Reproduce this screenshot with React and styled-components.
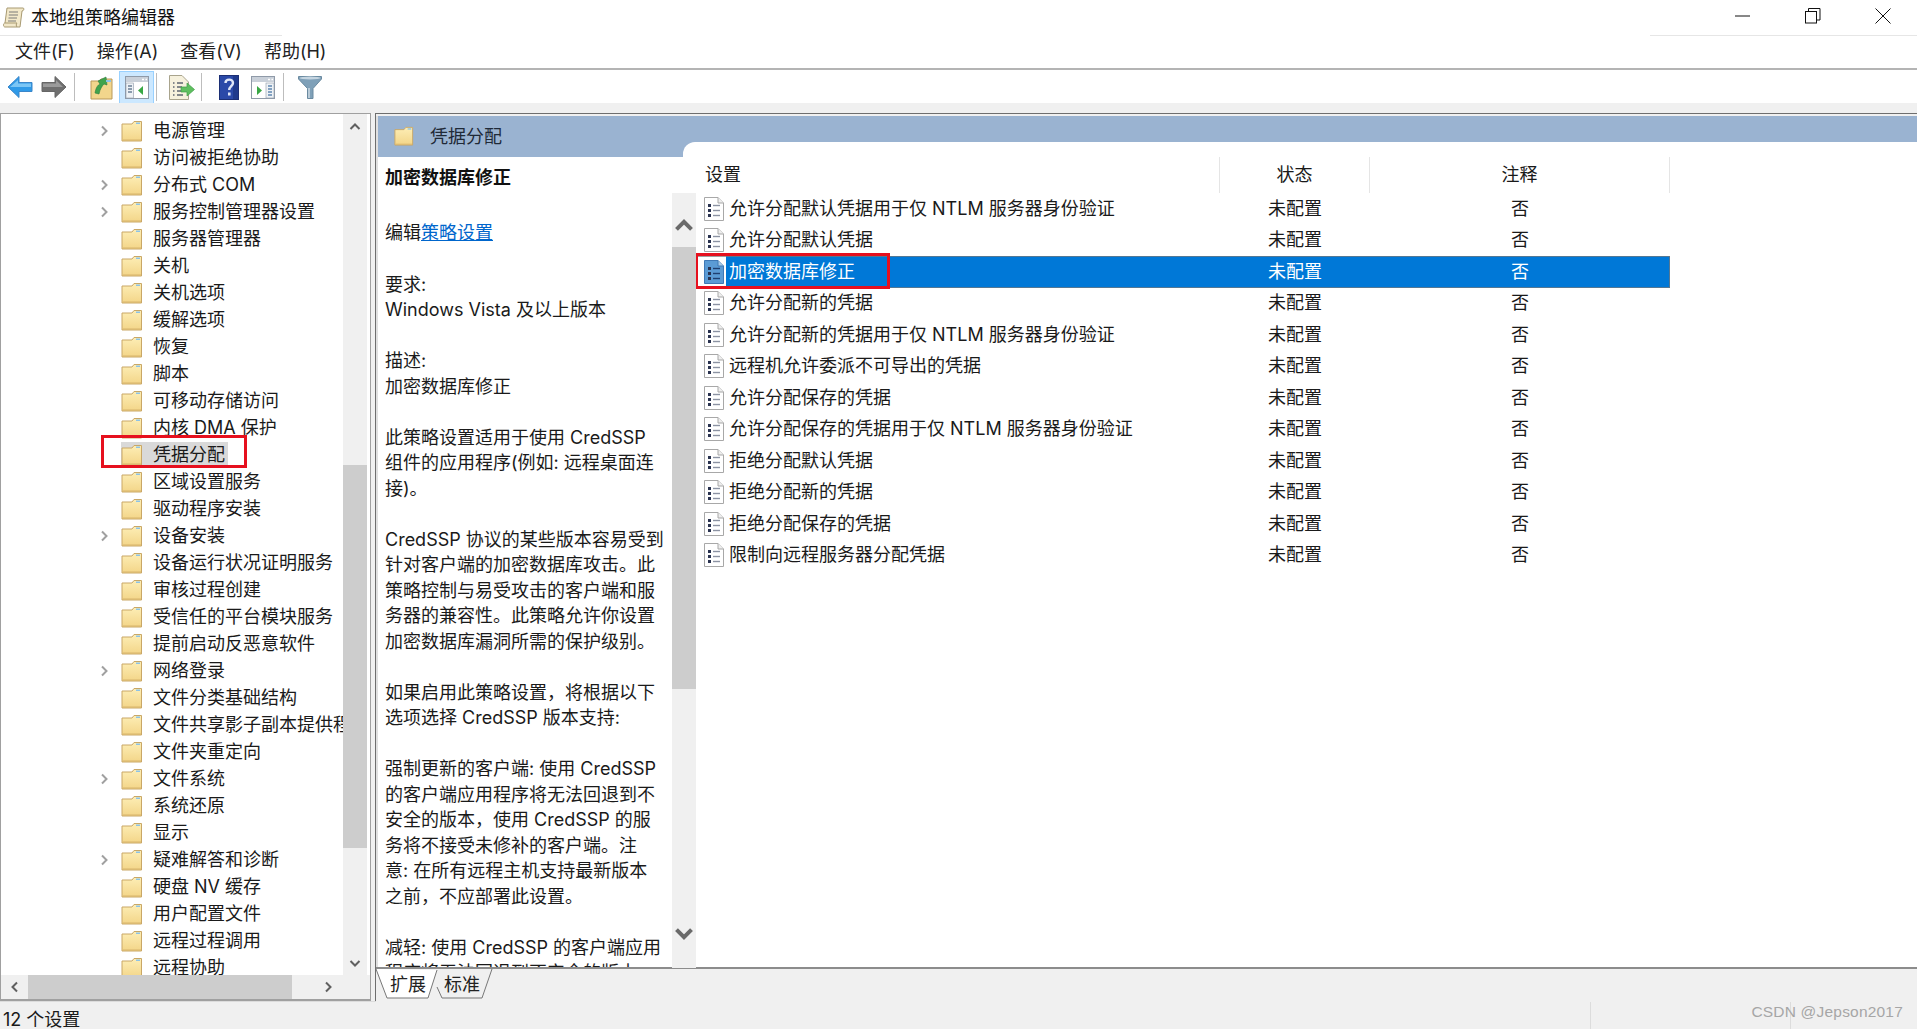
import React from "react";
import styled, { createGlobalStyle } from "styled-components";

const treeItems = [
  ["电源管理", true], ["访问被拒绝协助"], ["分布式 COM", true], ["服务控制管理器设置", true],
  ["服务器管理器"], ["关机"], ["关机选项"], ["缓解选项"], ["恢复"], ["脚本"], ["可移动存储访问"],
  ["内核 DMA 保护"], ["凭据分配", false, true], ["区域设置服务"], ["驱动程序安装"], ["设备安装", true],
  ["设备运行状况证明服务"], ["审核过程创建"], ["受信任的平台模块服务"], ["提前启动反恶意软件"],
  ["网络登录", true], ["文件分类基础结构"], ["文件共享影子副本提供程序"], ["文件夹重定向"],
  ["文件系统", true], ["系统还原"], ["显示"], ["疑难解答和诊断", true], ["硬盘 NV 缓存"],
  ["用户配置文件"], ["远程过程调用"], ["远程协助"],
];

const policies = [
  "允许分配默认凭据用于仅 NTLM 服务器身份验证",
  "允许分配默认凭据",
  "加密数据库修正",
  "允许分配新的凭据",
  "允许分配新的凭据用于仅 NTLM 服务器身份验证",
  "远程机允许委派不可导出的凭据",
  "允许分配保存的凭据",
  "允许分配保存的凭据用于仅 NTLM 服务器身份验证",
  "拒绝分配默认凭据",
  "拒绝分配新的凭据",
  "拒绝分配保存的凭据",
  "限制向远程服务器分配凭据",
];

const descLines = [
  "要求:", "Windows Vista 及以上版本", "", "描述:", "加密数据库修正", "",
  "此策略设置适用于使用 CredSSP", "组件的应用程序(例如: 远程桌面连", "接)。", "",
  "CredSSP 协议的某些版本容易受到", "针对客户端的加密数据库攻击。此", "策略控制与易受攻击的客户端和服",
  "务器的兼容性。此策略允许你设置", "加密数据库漏洞所需的保护级别。", "",
  "如果启用此策略设置，将根据以下", "选项选择 CredSSP 版本支持:", "",
  "强制更新的客户端: 使用 CredSSP", "的客户端应用程序将无法回退到不", "安全的版本，使用 CredSSP 的服",
  "务将不接受未修补的客户端。注", "意: 在所有远程主机支持最新版本", "之前，不应部署此设置。", "",
  "减轻: 使用 CredSSP 的客户端应用", "程序将无法回退到不安全的版本，",
];

const GlobalStyle = createGlobalStyle`
  html, body { margin: 0; padding: 0; height: 100%; overflow: hidden; background: #f0f0f0; }
  body { font-family: Inter, "Noto Sans CJK SC", sans-serif; font-size: 18px; color: #1a1a1a; }
`;

const Window = styled.div`
  width: 1917px;
  height: 1029px;
  display: flex;
  flex-direction: column;
  overflow: hidden;
  position: relative;
`;

const TitleBar = styled.div`
  height: 35px;
  flex: none;
  display: flex;
  align-items: center;
  background: #fff;
  padding-left: 2px;
`;

const TitleText = styled.span`
  margin-left: 6px;
  color: #111;
  flex: 1;
  line-height: 35px;
`;

const WinButton = styled.div`
  width: 70px;
  height: 35px;
  display: flex;
  align-items: center;
  justify-content: center;
  padding-bottom: 3px;
  box-sizing: border-box;
`;

const WinButtons = styled.div`
  display: flex;
  margin-right: -1px;
`;

const MenuBar = styled.div`
  height: 33px;
  flex: none;
  display: flex;
  align-items: center;
  gap: 22px;
  padding-left: 15px;
  background-color: #fff;
  background-image: linear-gradient(#e6e6e6, #e6e6e6), linear-gradient(#e6e6e6, #e6e6e6);
  background-size: 282px 1px, 267px 1px;
  background-position: left top, right top;
  background-repeat: no-repeat;
  border-bottom: 2px solid #b4b4b4;
`;

const MenuItem = styled.span`
  line-height: 35px;
  color: #222;
`;

const ToolBar = styled.div`
  height: 33px;
  flex: none;
  display: flex;
  align-items: center;
  background: #fff;
  padding: 1px 0 0 7px;
  box-sizing: border-box;
`;

const ToolIcon = styled.div`
  display: flex;
  align-items: center;
  justify-content: center;
  height: 33px;
  box-sizing: border-box;
  width: ${(p) => p.$w}px;
  margin-left: ${(p) => p.$ml || 0}px;
  ${(p) => p.$active && "background: #cce8ff; border: 1px solid #99d1ff;"}
`;

const ToolSep = styled.div`
  width: 1px;
  height: 28px;
  background: #bdbdbd;
  margin-left: ${(p) => p.$ml || 0}px;
`;

const Band = styled.div`
  height: 10px;
  flex: none;
  background: #f0f0f0;
`;

const Main = styled.div`
  flex: 1;
  display: flex;
  min-height: 0;
`;

const TreePane = styled.div`
  width: 371px;
  flex: none;
  height: 888px;
  box-sizing: border-box;
  background: #fff;
  border: 1px solid #a0a0a0;
  border-bottom-width: 2px;
  display: grid;
  grid-template-columns: 342px 1fr;
  grid-template-rows: 1fr 24px;
`;

const TreeList = styled.div`
  overflow: hidden;
  padding-top: 3px;
`;

const TreeRow = styled.div`
  height: 27px;
  display: flex;
  align-items: center;
  white-space: nowrap;
`;

const Expander = styled.div`
  width: 14px;
  flex: none;
  margin-left: 96px;
  margin-right: 10px;
  display: flex;
  justify-content: center;
`;

const TreeLabel = styled.div`
  display: flex;
  align-items: center;
  height: 25px;
  gap: 10px;
  padding-right: 3px;
  background: ${(p) => (p.$selected ? "#d9d9d9" : "transparent")};
  line-height: 25px;
  overflow: hidden;
`;

const VScroll = styled.div`
  background: #f0f0f0;
  display: flex;
  flex-direction: column;
  align-items: center;
`;

const TreeScroll = styled(VScroll)`
  margin-right: 3px;
`;

const ScrollBtn = styled.div`
  height: ${(p) => p.$h || 25}px;
  width: ${(p) => (p.$w ? `${p.$w}px` : "100%")};
  flex: none;
  display: flex;
  align-items: center;
  justify-content: center;
`;

const ScrollGap = styled.div`
  flex: ${(p) => p.$flex || 1};
  min-height: ${(p) => p.$h || 0}px;
`;

const VThumb = styled.div`
  width: 100%;
  height: ${(p) => p.$h}px;
  flex: none;
  background: #cdcdcd;
`;

const HScroll = styled.div`
  background: #f0f0f0;
  grid-column: 1 / 3;
  display: flex;
  align-items: center;
`;

const HThumb = styled.div`
  width: 264px;
  height: 24px;
  background: #cdcdcd;
`;

const Splitter = styled.div`
  width: 4px;
  flex: none;
`;

const RightPane = styled.div`
  flex: 1;
  min-width: 0;
  height: 888px;
  display: flex;
  flex-direction: column;
  border-top: 1px solid #6e6e6e;
  border-left: 1px solid #6e6e6e;
`;

const BlueHead = styled.div`
  height: 41px;
  flex: none;
  margin-top: 2px;
  background: #9ab3d1;
  display: flex;
  align-items: flex-start;
  padding-left: 16px;
  gap: 16px;
  line-height: 42px;
  color: #1f2a38;
  border-left: 2px solid #e0e0e0;
`;

const BlueIcon = styled.div`
  height: 40px;
  display: flex;
  align-items: center;
`;

const Content = styled.div`
  flex: 1;
  min-height: 0;
  display: flex;
  background: #fff;
  border-left: 2px solid #e0e0e0;
`;

const Desc = styled.div`
  width: 294px;
  flex: none;
  overflow: hidden;
  padding: 8px 0 0 7px;
  box-sizing: border-box;
  line-height: 25.5px;
  white-space: nowrap;
`;

const DescTitle = styled.div`
  font-weight: 700;
  color: #111;
`;

const EditLine = styled.div`
  margin: 29px 0 26px;
  height: 26px;
`;

const PolicyLink = styled.a`
  color: #0066cc;
  text-decoration: underline;
`;

const DescLine = styled.div`
  height: 25.5px;
`;

const DescScroll = styled(VScroll)`
  width: 24px;
  flex: none;
  margin-top: 36px;
  position: relative;
  z-index: 1;
`;

const ListPane = styled.div`
  flex: 1;
  min-width: 0;
  margin: -15px 0 0 -13px;
  padding-left: 13px;
  background: #fff;
  border-top-left-radius: 12px;
`;

const ListHeader = styled.div`
  height: 36px;
  margin-top: 15px;
  display: grid;
  grid-template-columns: 524px 150px 300px;
  align-items: center;
`;

const HeadCell = styled.div`
  height: 36px;
  border-right: 1px solid #e5e5e5;
  padding-left: ${(p) => p.$left || 0}px;
  text-align: ${(p) => (p.$left ? "left" : "center")};
  line-height: 36px;
  box-sizing: border-box;
`;

const Rows = styled.div`
  width: 974px;
`;

const Row = styled.div`
  height: 31.5px;
  display: grid;
  grid-template-columns: 524px 150px 300px;
  align-items: center;
  line-height: 30px;
  white-space: nowrap;
  box-sizing: border-box;
  ${(p) =>
    p.$selected &&
    `background: linear-gradient(90deg, #fff 30px, #0078d7 30px); color: #fff;
     box-shadow: inset -1px -1px 0 rgba(120,120,120,.7), inset 0 1px 0 rgba(120,120,120,.7);`}
`;

const NameCell = styled.div`
  display: flex;
  align-items: center;
  gap: 5px;
  padding-left: 8px;
`;

const Centered = styled.div`
  text-align: center;
`;

const RedBox = styled.div`
  position: absolute;
  left: ${(p) => p.$x}px;
  top: ${(p) => p.$y}px;
  width: ${(p) => p.$w}px;
  height: ${(p) => p.$h}px;
  border: 3px solid #e6101e;
  box-sizing: border-box;
  pointer-events: none;
`;

const TabStrip = styled.div`
  height: 33px;
  flex: none;
  background: #f0f0f0;
  border-top: 2px solid #8c8c8c;
  margin-top: -1px;
  position: relative;
`;

const Tabs = styled.svg`
  display: block;
`;

const TabLabel = styled.span`
  position: absolute;
  top: 0;
  left: ${(p) => p.$x}px;
  line-height: 31px;
  color: #222;
`;

const StatusBar = styled.div`
  height: 27px;
  flex: none;
  margin-top: -1px;
  background: #f0f0f0;
  border-top: 1px solid #dcdcdc;
  display: flex;
  align-items: center;
  padding-left: 3px;
  line-height: 34px;
`;

const StatusText = styled.div`
  flex: 1;
  height: 27px;
  padding-top: 1px;
  box-sizing: border-box;
`;

const StatusCell = styled.div`
  width: ${(p) => p.$w}px;
  height: 27px;
  border-left: 1px solid #dcdcdc;
  box-sizing: border-box;
`;

const Watermark = styled.div`
  position: absolute;
  right: 14px;
  bottom: 8px;
  font-family: "Liberation Sans", sans-serif;
  font-size: 15.5px;
  letter-spacing: 0.2px;
  color: #a6a6a6;
`;

const Chevron = ({ dir = "right", size = 12, color = "#7a7a7a", width = 2 }) => {
  const d = {
    right: "M4 1.5 L8.5 6 L4 10.5",
    left: "M8 1.5 L3.5 6 L8 10.5",
    up: "M1.5 8 L6 3.5 L10.5 8",
    down: "M1.5 4 L6 8.5 L10.5 4",
  }[dir];
  return (
    <svg width={size} height={size} viewBox="0 0 12 12" fill="none">
      <path d={d} stroke={color} strokeWidth={width} />
    </svg>
  );
};

const Folder = ({ size = 22 }) => (
  <svg width={size} height={size} viewBox="0 0 22 22" style={{ flex: "none" }}>
    <defs>
      <linearGradient id="fg" x1="0" y1="0" x2="0" y2="1">
        <stop offset="0" stopColor="#fdeeb6" />
        <stop offset="1" stopColor="#f3d588" />
      </linearGradient>
    </defs>
    <path d="M1 4 H11 L13 1.5 H20.5 V21 H1 Z" fill="url(#fg)" stroke="#c9a766" strokeWidth="1" />
    <path d="M15 2.5 H19 V4 H15 Z" fill="#8cc3e6" />
    <path d="M2 20 H20" stroke="#d8b56d" strokeWidth="1" />
  </svg>
);

const DocIcon = ({ selected }) => (
  <svg width="20" height="24" viewBox="0 0 20 24" style={{ flex: "none" }}>
    <path
      d="M.5 .5 H14 L19.5 6 V23.5 H.5 Z"
      fill={selected ? "#5b9bd5" : "#fff"}
      stroke={selected ? "#3f78b5" : "#a8a8a8"}
    />
    <path d="M14 .5 V6 H19.5" fill={selected ? "#a9cbe8" : "#eee"} stroke={selected ? "#3f78b5" : "#a8a8a8"} />
    {[7, 12, 17].map((y) => (
      <g key={y}>
        <rect x="4" y={y} width="3" height="3" fill="#2a3350" />
        <path d={`M9 ${y + 1.5} H16`} stroke={selected ? "#1f3f70" : "#8c93a3"} strokeWidth="1.4" />
      </g>
    ))}
  </svg>
);

const ScrollIcon = () => (
  <svg width="23" height="23" viewBox="0 0 23 23">
    <path d="M5 2 H21 C22.5 2 22 5 20 5 L18 21 H3 C1 21 1 17 3 17 Z" fill="#f2e8c9" stroke="#a89a72" />
    <path d="M7 6 H16 M6.8 9 H16 M6.5 12 H15 M6 15 H14" stroke="#7a7a78" strokeWidth="1" />
    <path d="M3 17 H15 C14 18 14 20 15 21" fill="none" stroke="#a89a72" />
  </svg>
);

const ArrowLeft = () => (
  <svg width="26" height="24" viewBox="0 0 26 24">
    <path d="M12 1.5 L1 12 L12 22.5 V16.5 H25 V7.5 H12 Z" fill="#2f9ae8" stroke="#3b86c9" />
    <path d="M11 5 L3 12 H24 V8.5 H11 Z" fill="#7cc6f5" />
  </svg>
);

const ArrowRight = () => (
  <svg width="26" height="24" viewBox="0 0 26 24">
    <path d="M14 1.5 L25 12 L14 22.5 V16.5 H1 V7.5 H14 Z" fill="#6f6f6f" stroke="#666" />
    <path d="M15 5 L22 12 H2 V8.5 H15 Z" fill="#9b9b9b" />
  </svg>
);

const UpFolder = () => (
  <svg width="23" height="25" viewBox="0 0 23 25">
    <path d="M1 6 H9 L11 4 H22 V24 H1 Z" fill="#f2d68c" stroke="#b9995a" />
    <path d="M5 18 C6 12 8 10 10 9 L8 6 L16 2 L17 10 L14 9 C12 11 10 14 9 19 Z" fill="#3fa34d" stroke="#2d7d3a" strokeWidth=".6" />
    <path d="M16 5 H21 V7 H16 Z" fill="#8cc3e6" />
  </svg>
);

const PaneIcon = ({ arrow, arrowLeft }) => (
  <svg width="24" height="23" viewBox="0 0 24 23">
    <rect x=".5" y=".5" width="23" height="22" fill="#fff" stroke="#8f9aa8" />
    <rect x="1" y="1" width="22" height="5" fill="#c9d0d9" />
    <path d="M17 3.5 H19 M20.5 3.5 H22" stroke="#fff" strokeWidth="1.5" />
    <rect x="1" y="7" width="7.5" height="15" fill="#eef2f6" stroke="#8f9aa8" strokeWidth=".6" />
    <path d="M3 10 H7 M3 13 H7 M3 16 H7" stroke="#6b7f95" strokeWidth="1.4" />
    <path d={arrowLeft ? "M18 10 L13 14.5 L18 19 Z" : "M13 10 L18 14.5 L13 19 Z"} fill={arrow} />
  </svg>
);

const ActionIcon = () => (
  <svg width="24" height="23" viewBox="0 0 24 23">
    <rect x=".5" y=".5" width="23" height="22" fill="#fff" stroke="#8f9aa8" />
    <rect x="1" y="1" width="22" height="5" fill="#c9d0d9" />
    <path d="M17 3.5 H19 M20.5 3.5 H22" stroke="#fff" strokeWidth="1.5" />
    <rect x="15" y="7" width="8" height="15" fill="#eef2f6" stroke="#8f9aa8" strokeWidth=".6" />
    <path d="M17 10 H21 M17 13 H21 M17 16 H21 M17 19 H21" stroke="#5f86b0" strokeWidth="1.4" />
    <path d="M6 10 L11 14.5 L6 19 Z" fill="#39a845" />
  </svg>
);

const ExportIcon = () => (
  <svg width="26" height="25" viewBox="0 0 26 25">
    <path d="M.5 .5 H13 L19.5 7 V24.5 H.5 Z" fill="#f6f1dd" stroke="#a9a48d" />
    <path d="M4 8 H5.5 M8 8 H14 M4 12 H5.5 M8 12 H13 M4 16 H5.5 M8 16 H13 M4 20 H5.5 M8 20 H14" stroke="#5d6470" strokeWidth="1.3" />
    <path d="M12 12 H18 V8 L25.5 14.5 L18 21 V17 H12 Z" fill="#5fbf5f" stroke="#3f9e48" strokeWidth=".7" />
  </svg>
);

const HelpIcon = () => (
  <svg width="20" height="25" viewBox="0 0 20 25">
    <rect x=".5" y=".5" width="19" height="24" fill="#2a49a8" stroke="#1c2f75" />
    <rect x="14" y="1" width="5" height="23" fill="#1f3a8c" />
    <path d="M6.5 8 C6.5 3.5 14 3.5 14 8 C14 11 10.2 11.5 10.2 15" fill="none" stroke="#dfe6f7" strokeWidth="2.4" />
    <rect x="9" y="17.5" width="2.6" height="3" fill="#dfe6f7" />
  </svg>
);

const FilterIcon = () => (
  <svg width="24" height="24" viewBox="0 0 24 24">
    <path d="M.5 1.5 H23.5 V4 L15 13.5 V23.5 H9.5 V13.5 L.5 4 Z" fill="#7fa0b8" stroke="#6a8aa0" />
    <ellipse cx="12" cy="3" rx="10.5" ry="1.5" fill="#c5d5e1" />
    <path d="M11 13 V23" stroke="#b9cbd8" strokeWidth="2" />
  </svg>
);

const MinIcon = () => (
  <svg width="16" height="2" viewBox="0 0 16 2"><path d="M0 1 H15" stroke="#111" /></svg>
);

const RestoreIcon = () => (
  <svg width="16" height="16" viewBox="0 0 16 16" fill="none">
    <rect x=".5" y="3.5" width="11" height="11.5" stroke="#111" />
    <path d="M3.5 3.5 V.5 H15 V12 H11.5" stroke="#111" />
  </svg>
);

const CloseIcon = () => (
  <svg width="16" height="16" viewBox="0 0 16 16" fill="none">
    <path d="M.5 .5 L15.5 15.5 M15.5 .5 L.5 15.5" stroke="#111" />
  </svg>
);

const App = () => (
  <Window>
    <GlobalStyle />
    <TitleBar>
      <ScrollIcon />
      <TitleText>本地组策略编辑器</TitleText>
      <WinButtons>
        <WinButton><MinIcon /></WinButton>
        <WinButton><RestoreIcon /></WinButton>
        <WinButton><CloseIcon /></WinButton>
      </WinButtons>
    </TitleBar>
    <MenuBar>
      <MenuItem>文件(F)</MenuItem>
      <MenuItem>操作(A)</MenuItem>
      <MenuItem>查看(V)</MenuItem>
      <MenuItem>帮助(H)</MenuItem>
    </MenuBar>
    <ToolBar>
      <ToolIcon $w={26}><ArrowLeft /></ToolIcon>
      <ToolIcon $w={26} $ml={8}><ArrowRight /></ToolIcon>
      <ToolSep $ml={7} />
      <ToolIcon $w={23} $ml={15}><UpFolder /></ToolIcon>
      <ToolIcon $w={35} $ml={6} $active><PaneIcon arrow="#39a845" arrowLeft /></ToolIcon>
      <ToolSep $ml={2} />
      <ToolIcon $w={26} $ml={12}><ExportIcon /></ToolIcon>
      <ToolSep $ml={6} />
      <ToolIcon $w={20} $ml={17}><HelpIcon /></ToolIcon>
      <ToolIcon $w={24} $ml={12}><ActionIcon /></ToolIcon>
      <ToolSep $ml={8} />
      <ToolIcon $w={24} $ml={14}><FilterIcon /></ToolIcon>
    </ToolBar>
    <Band />
    <Main>
      <TreePane>
        <TreeList>
          {treeItems.map(([name, expandable, selected]) => (
            <TreeRow key={name}>
              <Expander>{expandable && <Chevron color="#a0a0a0" />}</Expander>
              <TreeLabel $selected={selected}>
                <Folder />
                {name}
              </TreeLabel>
            </TreeRow>
          ))}
        </TreeList>
        <TreeScroll>
          <ScrollBtn><Chevron dir="up" color="#606060" /></ScrollBtn>
          <ScrollGap $h={326} $flex="none" />
          <VThumb $h={383} />
          <ScrollGap />
          <ScrollBtn><Chevron dir="down" color="#606060" /></ScrollBtn>
        </TreeScroll>
        <HScroll>
          <ScrollBtn $h={24} $w={27}><Chevron dir="left" color="#606060" /></ScrollBtn>
          <HThumb />
          <ScrollBtn $h={24} $w={72}><Chevron dir="right" color="#606060" /></ScrollBtn>
          <ScrollGap />
        </HScroll>
      </TreePane>
      <Splitter />
      <RightPane>
        <BlueHead>
          <BlueIcon><Folder size={20} /></BlueIcon>
          凭据分配
        </BlueHead>
        <Content>
          <Desc>
            <DescTitle>加密数据库修正</DescTitle>
            <EditLine>
              编辑<PolicyLink>策略设置</PolicyLink>
            </EditLine>
            {descLines.map((line, i) => (
              <DescLine key={i}>{line}</DescLine>
            ))}
          </Desc>
          <DescScroll>
            <ScrollGap $h={12} $flex="none" />
            <ScrollBtn $h={42}><Chevron dir="up" size={20} color="#6a6a6a" width={2.4} /></ScrollBtn>
            <VThumb $h={442} />
            <ScrollGap />
            <ScrollBtn $h={70}><Chevron dir="down" size={20} color="#6a6a6a" width={2.4} /></ScrollBtn>
          </DescScroll>
          <ListPane>
            <ListHeader>
              <HeadCell $left={9}>设置</HeadCell>
              <HeadCell>状态</HeadCell>
              <HeadCell>注释</HeadCell>
            </ListHeader>
            <Rows>
              {policies.map((name, i) => (
                <Row key={name} $selected={i === 2}>
                  <NameCell>
                    <DocIcon selected={i === 2} />
                    {name}
                  </NameCell>
                  <Centered>未配置</Centered>
                  <Centered>否</Centered>
                </Row>
              ))}
            </Rows>
          </ListPane>
        </Content>
        <TabStrip>
          <Tabs width="120" height="31" viewBox="0 0 120 31" fill="none">
            <path d="M0 0 L11 29 H52 L61 1" fill="#fff" stroke="#777" />
            <path d="M61 18 L66 29 H106 L116 0" stroke="#777" />
          </Tabs>
          <TabLabel $x={14}>扩展</TabLabel>
          <TabLabel $x={68}>标准</TabLabel>
        </TabStrip>
      </RightPane>
    </Main>
    <StatusBar>
      <StatusText>12 个设置</StatusText>
      <StatusCell $w={200} />
      <StatusCell $w={127} />
    </StatusBar>
    <Watermark>CSDN @Jepson2017</Watermark>
    <RedBox $x={101} $y={435} $w={146} $h={33} />
    <RedBox $x={695} $y={253} $w={195} $h={36} />
  </Window>
);

export default App;
